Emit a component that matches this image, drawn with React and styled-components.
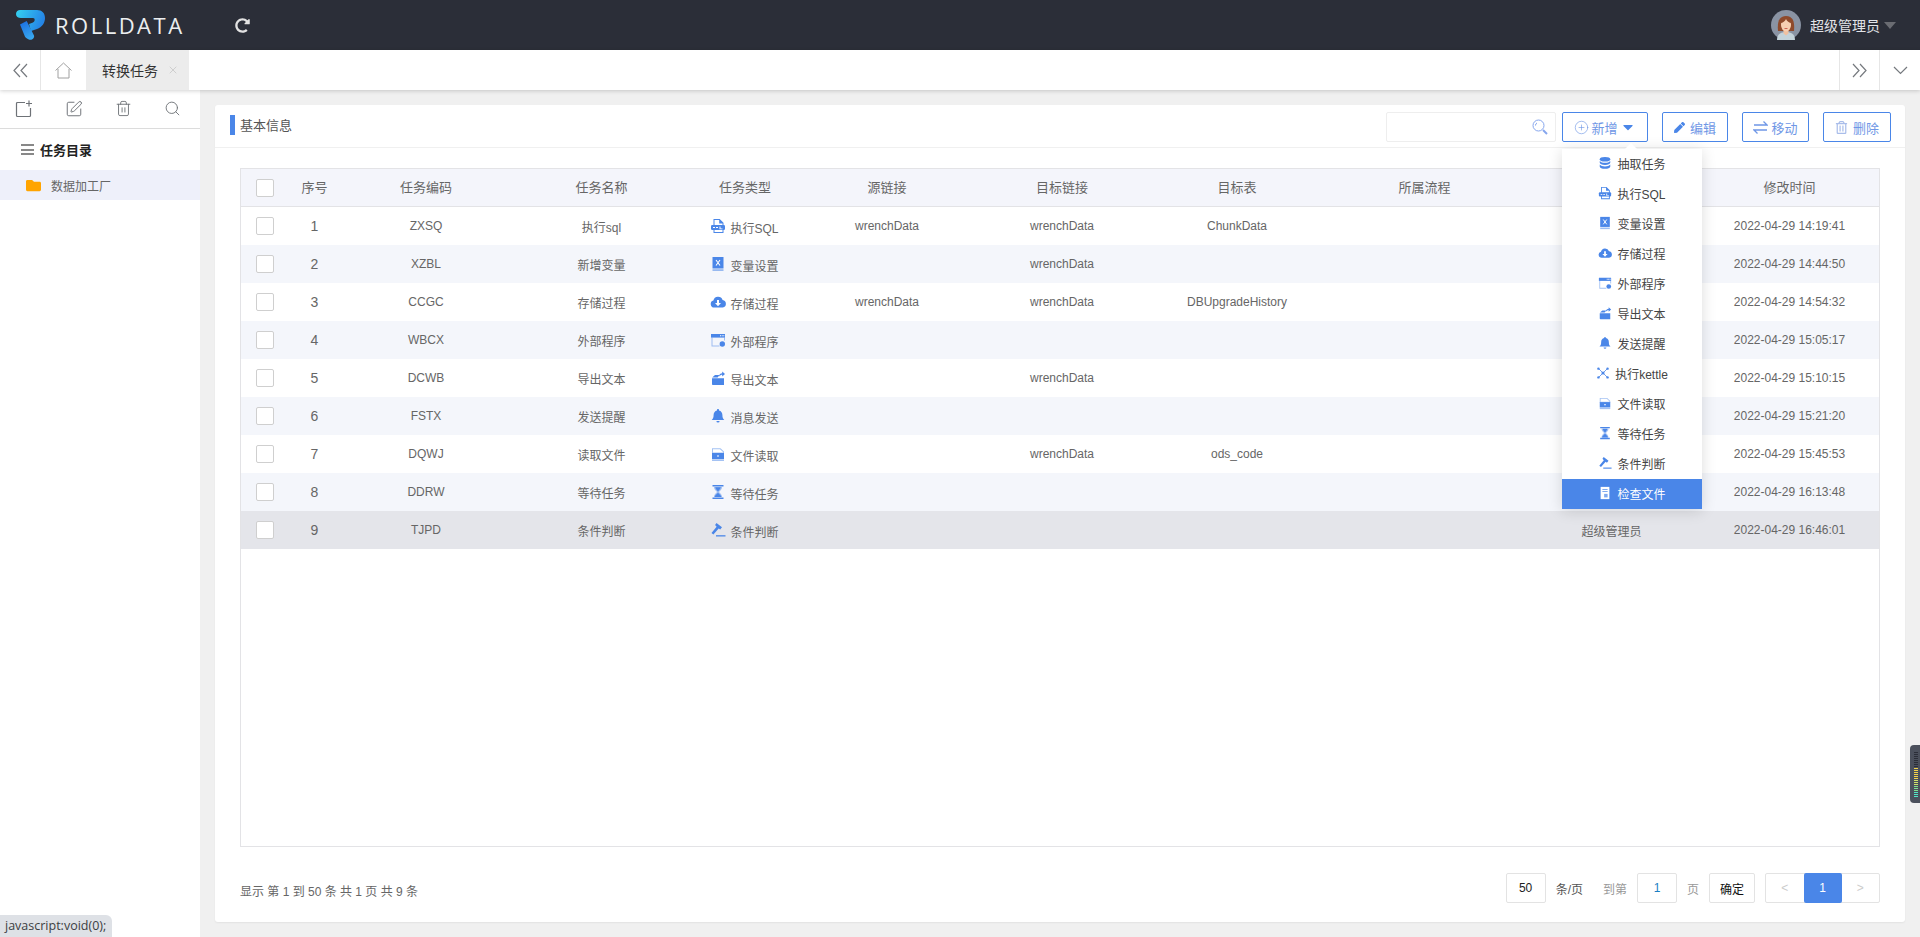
import styled, { createGlobalStyle } from "styled-components";
import { CirclePlus, Search, SquarePen, Trash2, X } from "lucide-react";
import { FaCaretDown, FaFolder, FaPen, FaRedoAlt, FaRegTrashAlt } from "react-icons/fa";

const BLUE = "#4a86e8";

const GlobalStyle = createGlobalStyle`
  html, body { margin: 0; padding: 0; height: 100%; }
  body {
    background: #f0f0f0;
    color: #666;
    font-family: "Liberation Sans", "Noto Sans CJK SC", sans-serif;
    font-size: 12px;
    overflow: hidden;
  }
  #root { height: 100%; }
  * { box-sizing: border-box; }
`;

const icons = {
  database: (
    <>
      <ellipse cx="8" cy="3.6" rx="6" ry="2.6" />
      <path d="M2 5.6c1 1.5 3.4 2.2 6 2.2s5-.7 6-2.2v2.2c0 1.4-2.7 2.5-6 2.5S2 9.2 2 7.8z" />
      <path d="M2 9.8c1 1.5 3.4 2.2 6 2.2s5-.7 6-2.2v2.4c0 1.4-2.7 2.5-6 2.5s-6-1.1-6-2.5z" />
    </>
  ),
  sql: (
    <>
      <path d="M3.5 1h6.2L13.5 4.8V15h-10zM4.5 2v12h8V5.4H9.2V2z" fillRule="evenodd" />
      <rect x="1" y="7" width="14" height="5" rx="1.2" />
      <path d="M3 9h2v1H3zM6 9h2v1H6zM9.5 8.6h1v2h2v.6h-3z" fill="#fff" />
    </>
  ),
  book: (
    <>
      <path d="M2.5 1h11v11.5h-11z" />
      <path d="M2.5 13.2h11V15h-11z" opacity=".55" />
      <path d="M6 4l4 5.5M10 4l-4 5.5" stroke="#fff" strokeWidth="1.1" fill="none" />
    </>
  ),
  cloud: (
    <>
      <path d="M4.2 13.5A3.5 3.5 0 0 1 3.4 6.6 4.8 4.8 0 0 1 12.6 6a3.8 3.8 0 0 1 .2 7.5z" />
      <path d="M7 6h2v3h2L8 12.2 5 9h2z" fill="#fff" />
    </>
  ),
  window: (
    <>
      <path d="M1 2h14v3.6H1z" />
      <path d="M1.5 5.5h1v8h7v1h-8z" opacity=".5" />
      <path d="M14 5.5h1v3h-1z" opacity=".5" />
      <circle cx="12.3" cy="12" r="2.7" />
      <path d="M10 3.2h1v1h-1zM11.7 3.2h1v1h-1zM13.3 3.2h1v1h-1z" fill="#fff" />
    </>
  ),
  exportText: (
    <>
      <path d="M2 8.2h12V15H2.8A.8.8 0 0 1 2 14.2z" />
      <path d="M2.2 7.4 5 5h4.5L7.6 7.4z" />
      <path d="M9 6.4c.2-2 1.6-3.2 3.2-3.2V1.4L15 4l-2.8 2.5V4.8c-1.1 0-2 .5-3.2 1.6z" />
    </>
  ),
  bell: (
    <>
      <path d="M8 1c.6 0 1 .4 1 1v.4c2.2.5 3.4 2.3 3.4 4.6 0 2.6.6 3.9 1.9 5H1.700C3 10.900 3.600 9.600 3.600 7c0-2.300 1.200-4.100 3.400-4.600V2c0-.6.4-1 1-1z" />
      <path d="M6.400 13h3.200a1.600 1.600 0 0 1-3.200 0z" />
    </>
  ),
  kettle: (
    <>
      <path d="M3 3l5 5 5-5M3 13l5-5 5 5" stroke="currentColor" strokeWidth=".9" fill="none" />
      <circle cx="8" cy="8" r="1.800" />
      <circle cx="2.800" cy="3" r="1.400" />
      <circle cx="13.200" cy="3" r="1.400" />
      <circle cx="2.800" cy="13" r="1.400" />
      <circle cx="13.200" cy="13" r="1.400" />
    </>
  ),
  fileRead: (
    <>
      <path d="M2 2.200h8.500L14 5.600v2H2z" opacity=".5" />
      <path d="M3 3.200v3.400h10V6L10 3.200z" fill="#fff" />
      <path d="M2 7h12v6H2z" />
      <path d="M2 13.300h12V15H2z" opacity=".5" />
      <path d="M7 9.500h2v1H7z" fill="#fff" />
    </>
  ),
  hourglass: (
    <>
      <path d="M2.500 1h11v1.500h-11zM2.500 13.500h11V15h-11z" />
      <path d="M4 3h8c0 2.500-2 3.800-3 5 1 1.200 3 2.500 3 5H4c0-2.500 2-3.800 3-5-1-1.200-3-2.500-3-5z" opacity=".5" />
      <path d="M5.200 3.200h5.600C10.400 5 9 6.300 8 7.400 7 6.300 5.600 5 5.200 3.200zM4.600 13c.4-1.800 2.200-3 3.400-4.200 1.200 1.200 3 2.400 3.400 4.200z" />
    </>
  ),
  gavel: (
    <>
      <path d="M6.500 1 12 5.300l-1.800 2.300-1.500-1.100-5.300 6-1.900-1.500 5.100-6.200L5.100 3.100z" />
      <path d="M6 13.200h9.500v1.300H6z" />
    </>
  ),
  checkFile: (
    <>
      <path d="M3 1h10v14H3z" />
      <path d="M5 3.500h6v1H5zM5 5.800h6v1H5z" fill={BLUE} opacity=".7" />
      <path d="M7 9h4v4H7z" fill={BLUE} opacity=".7" />
    </>
  ),
};

const Glyph = ({ name, size = 16 }) => (
  <svg width={size} height={size} viewBox="0 0 16 16" fill="currentColor">
    {icons[name]}
  </svg>
);

const Logo = () => (
  <svg width="29" height="31" viewBox="0 0 29 31">
    <defs>
      <linearGradient id="logoTop" x1="0" y1="0" x2="1" y2="0.3">
        <stop offset="0" stopColor="#35d2f0" />
        <stop offset="1" stopColor="#2585e6" />
      </linearGradient>
      <linearGradient id="logoStem" x1="0.2" y1="0" x2="0.6" y2="1">
        <stop offset="0" stopColor="#1c6fe0" />
        <stop offset="1" stopColor="#38a8f0" />
      </linearGradient>
    </defs>
    <path d="M4 14.500 10.700 11 18 25.500c.8 2.500-2 5-4.500 4.200-1.600-.5-3.500-1.700-4.500-3z" fill="url(#logoStem)" />
    <path
      d="M0 4C0 1.500 2 0 4 0h17c5 0 8 3 8 8s-3 9-8 11l-6 2-2-7 4-1.500C19 11.800 19.500 8 17 8H5C2 8 0 6.500 0 4z"
      fill="url(#logoTop)"
    />
  </svg>
);

const Avatar = () => (
  <svg width="30" height="30" viewBox="0 0 30 30">
    <circle cx="15" cy="15" r="15" fill="#8a93a3" />
    <path d="M7 21c-.5-6-.5-15 8-15s8.500 9 8 15z" fill="#8f4a2b" />
    <path d="M6 30c0-6 4-8 9-8s9 2 9 8z" fill="#c4d3da" />
    <path d="M12.500 19h5v4.500l-2.500 2-2.500-2z" fill="#f0c0a0" />
    <ellipse cx="15" cy="15" rx="5" ry="6.500" fill="#f7cfb2" />
    <path d="M10 13c2.500-.5 4-2 5-4 1 2 2.500 3.500 5 4 0-4-2-6-5-6s-5 2-5 6z" fill="#8f4a2b" />
    <path d="M13.500 18.500h3" stroke="#c9574a" strokeWidth=".9" />
  </svg>
);

const Line = ({ w, h = w, d, color = "#75797e", sw = 1.2 }) => (
  <svg width={w} height={h} viewBox={`0 0 ${w} ${h}`} fill="none" stroke={color} strokeWidth={sw}>
    <path d={d} />
  </svg>
);

const AddSquare = () => (
  <svg width="18" height="18" viewBox="0 0 18 18" fill="none" stroke="#6e7277" strokeWidth="1.200">
    <path d="M10 2.500H2.500a1 1 0 0 0-1 1v12a1 1 0 0 0 1 1h12a1 1 0 0 0 1-1V8" />
    <path d="M14 .5v6M11 3.500h6" />
  </svg>
);

const Magnifier = () => (
  <svg width="16" height="16" viewBox="0 0 16 16" fill="none" stroke="#86a6ee">
    <circle cx="6.500" cy="6.500" r="5.500" />
    <path d="M3.500 6.500a3 3 0 0 1 1.500-2.600" />
    <path d="M11 11l4 4" strokeWidth="2" />
  </svg>
);

const TopBar = styled.header`
  display: flex;
  align-items: center;
  height: 50px;
  flex: none;
  padding: 0 24px 0 16px;
  background: #2b2e38;
  color: #e6e6e6;
`;

const Brand = styled.div`
  display: flex;
  align-items: center;
  gap: 10px;
  width: 219px;
`;

const BrandName = styled.span`
  color: #eceef0;
  font-family: "Open Sans", "Liberation Sans", sans-serif;
  font-size: 22px;
  letter-spacing: 2.5px;
`;

const Reload = styled(FaRedoAlt)`
  font-size: 15px;
  color: #e2e2e2;
`;

const User = styled.div`
  display: flex;
  align-items: center;
  margin-left: auto;
  gap: 9px;
  font-size: 14px;
  color: #e2e4e8;
`;

const UserCaret = styled.span`
  width: 0;
  height: 0;
  margin-left: -5px;
  border-left: 6px solid transparent;
  border-right: 6px solid transparent;
  border-top: 7px solid #6a6c72;
`;

const TabBar = styled.nav`
  display: flex;
  align-items: stretch;
  height: 40px;
  flex: none;
  background: #fff;
  box-shadow: 0 1px 4px rgba(0, 0, 0, 0.18);
  position: relative;
  z-index: 2;
`;

const TabTool = styled.button`
  display: flex;
  align-items: center;
  justify-content: center;
  width: ${(p) => p.$w}px;
  padding: 0;
  border: 0;
  border-right: ${(p) => (p.$edge === "right" ? "1px solid #e6e6e6" : "0")};
  border-left: ${(p) => (p.$edge === "left" ? "1px solid #e6e6e6" : "0")};
  background: transparent;
`;

const ActiveTab = styled.div`
  display: flex;
  align-items: center;
  width: 103px;
  padding-left: 16px;
  gap: 9px;
  background: #ececec;
  color: #333;
  font-size: 14px;
`;

const TabFill = styled.div`
  flex: 1;
`;

const Body = styled.div`
  display: flex;
  flex: 1;
  min-height: 0;
`;

const Sidebar = styled.aside`
  width: 200px;
  flex: none;
  background: #fff;
`;

const SideTools = styled.div`
  display: flex;
  align-items: center;
  height: 39px;
  padding: 0 0 1px 15px;
  gap: 32px;
  border-bottom: 1px solid #dcdcdc;
  color: #6e7277;
`;

const TreeTitle = styled.div`
  display: flex;
  align-items: center;
  height: 41px;
  padding-left: 21px;
  gap: 6px;
  color: #222;
  font-size: 13px;
  font-weight: 700;
`;

const Burger = styled.span`
  display: block;
  width: 13px;
  height: 11px;
  border-top: 2px solid #888;
  border-bottom: 2px solid #888;
  position: relative;

  &::after {
    content: "";
    position: absolute;
    left: 0;
    right: 0;
    top: 2.5px;
    height: 2px;
    background: #888;
  }
`;

const TreeItem = styled.div`
  display: flex;
  align-items: center;
  height: 30px;
  padding-left: 26px;
  gap: 10px;
  background: #eef0fa;
  color: #666;
  font-size: 12px;
`;

const Folder = styled(FaFolder)`
  font-size: 15px;
  color: #ffa400;
`;

const Main = styled.main`
  flex: 1;
  min-width: 0;
  padding: 15px;
`;

const Card = styled.section`
  display: flex;
  flex-direction: column;
  height: 100%;
  background: #fff;
  border-radius: 3px;
  box-shadow: 0 1px 2px rgba(0, 0, 0, 0.06);
`;

const CardHead = styled.div`
  display: flex;
  align-items: flex-start;
  height: 43px;
  flex: none;
  padding: 7px 14px 0 15px;
  border-bottom: 1px solid #f0f0f0;
`;

const CardTitle = styled.h2`
  display: flex;
  align-items: center;
  height: 20px;
  margin: 3px 0 0;
  padding: 0 0 2px 5px;
  border-left: 5px solid ${BLUE};
  color: #555;
  font-size: 13px;
  font-weight: 400;
`;

const HeadTools = styled.div`
  display: flex;
  align-items: center;
  margin-left: auto;
  gap: 14px;
`;

const SearchBox = styled.div`
  display: flex;
  align-items: center;
  justify-content: flex-end;
  width: 170px;
  height: 30px;
  margin-right: -8px;
  padding-right: 7px;
  border: 1px solid #eee;
  border-radius: 2px;
`;

const ToolWrap = styled.div`
  position: relative;
`;

const ToolButton = styled.button`
  display: flex;
  align-items: center;
  justify-content: center;
  width: ${(p) => p.$w}px;
  height: 30px;
  padding: 0;
  gap: ${(p) => p.$gap || 5}px;
  border: 1px solid ${BLUE};
  border-radius: 2px;
  background: #fff;
  color: #6f97e6;
  font: inherit;
  font-size: 13px;
`;

const Menu = styled.ul`
  position: absolute;
  top: 37px;
  left: 0;
  z-index: 5;
  width: 140px;
  margin: 0;
  padding: 0;
  list-style: none;
  background: #fff;
  box-shadow: 0 2px 14px rgba(0, 0, 0, 0.14);

  &::before {
    content: "";
    position: absolute;
    top: -6px;
    left: 63px;
    border-left: 6px solid transparent;
    border-right: 6px solid transparent;
    border-bottom: 6px solid #fff;
  }
`;

const MenuItem = styled.li`
  display: flex;
  align-items: center;
  justify-content: center;
  height: 30px;
  padding-bottom: 2px;
  gap: 5px;
  background: ${(p) => (p.$active ? BLUE : "transparent")};
  color: ${(p) => (p.$active ? "#fff" : "#444")};
  font-size: 12px;

  svg {
    color: ${(p) => (p.$active ? "#fff" : BLUE)};
  }
`;

const CardBody = styled.div`
  display: flex;
  flex-direction: column;
  flex: 1;
  min-height: 0;
  padding: 20px 25px 0;
`;

const Table = styled.div`
  flex: 1;
  min-height: 0;
  border: 1px solid #e3e3e6;
`;

const COLUMNS = "47px 53px 170px 181px 106px 178px 172px 178px 197px 177px 1fr";

const HeadRow = styled.div`
  display: grid;
  grid-template-columns: ${COLUMNS};
  height: 38px;
  border-bottom: 1px solid #e3e3e6;
  background: #f4f5fb;
  color: #666;
  font-size: 13px;
`;

const Row = styled.div`
  display: grid;
  grid-template-columns: ${COLUMNS};
  height: 38px;
  background: ${(p) => (p.$hover ? "#e4e5ea" : p.$even ? "#f4f6fb" : "#fff")};
  color: #666;
  font-size: 12px;
`;

const Cell = styled.div`
  display: flex;
  align-items: center;
  justify-content: center;
  min-width: 0;
  white-space: nowrap;
`;

const HeadCell = styled(Cell)`
  padding-bottom: 2px;
`;

const IndexCell = styled(Cell)`
  font-size: 14px;
`;

const TypeCell = styled(Cell)`
  gap: 4px;
  padding-right: 1px;
  color: #666;

  svg {
    color: ${BLUE};
  }

  span {
    margin-top: 3px;
  }
`;

const Check = styled.span`
  display: block;
  width: 18px;
  height: 18px;
  border: 1px solid #cfcfcf;
  border-radius: 2px;
  background: #fff;
`;

const Footer = styled.div`
  display: flex;
  align-items: center;
  justify-content: space-between;
  height: 75px;
  flex: none;
  padding-top: 7px;
`;

const Summary = styled.div`
  margin-top: 4px;
  color: #666;
  font-size: 12px;
`;

const Pager = styled.div`
  display: flex;
  align-items: center;
  color: #999;
  font-size: 12px;
`;

const PageBox = styled.div`
  display: flex;
  align-items: center;
  justify-content: center;
  width: ${(p) => p.$w}px;
  height: 30px;
  border: 1px solid #e3e3e3;
  border-radius: 2px;
  background: #fff;
  color: ${(p) => p.$color || "#222"};
  font-size: 12px;
`;

const PageLabel = styled.span`
  margin: 0 10px;
  color: ${(p) => p.$color || "#999"};
`;

const PageGroup = styled.div`
  display: flex;
  height: 30px;
  margin-left: 10px;
  border: 1px solid #e3e3e3;
  border-radius: 2px;
`;

const PageNum = styled.div`
  display: flex;
  align-items: center;
  justify-content: center;
  width: ${(p) => p.$w || 37.5}px;
  margin: ${(p) => (p.$active ? "-1px 0" : "0")};
  border-radius: 2px;
  background: ${(p) => (p.$active ? BLUE : "transparent")};
  color: ${(p) => (p.$active ? "#fff" : "#ccc")};
  font-size: 12px;
`;

const StatusBubble = styled.div`
  position: fixed;
  left: 0;
  bottom: 0;
  z-index: 9;
  width: 112px;
  height: 22px;
  padding: 3px 0 0 5px;
  border-top-right-radius: 6px;
  background: #dee1e6;
  color: #3c4043;
  font-family: "Open Sans", "Liberation Sans", sans-serif;
  font-size: 12.5px;
  line-height: 16px;
  white-space: nowrap;
`;

const Meter = styled.div`
  position: fixed;
  right: 0;
  top: 745px;
  z-index: 9;
  display: flex;
  flex-direction: column;
  gap: 1px;
  width: 10px;
  height: 58px;
  padding: 7px 0 0 4px;
  border-radius: 4px 0 0 4px;
  background: #4b505c;
`;

const MeterBar = styled.i`
  display: block;
  width: 4px;
  height: 1px;
  background: ${(p) => p.$c};
`;

const menuItems = [
  ["database", "抽取任务"],
  ["sql", "执行SQL"],
  ["book", "变量设置"],
  ["cloud", "存储过程"],
  ["window", "外部程序"],
  ["exportText", "导出文本"],
  ["bell", "发送提醒"],
  ["kettle", "执行kettle"],
  ["fileRead", "文件读取"],
  ["hourglass", "等待任务"],
  ["gavel", "条件判断"],
  ["checkFile", "检查文件"],
];

const rows = [
  ["ZXSQ", "执行sql", "sql", "执行SQL", "wrenchData", "wrenchData", "ChunkData", "", "14:19:41"],
  ["XZBL", "新增变量", "book", "变量设置", "", "wrenchData", "", "", "14:44:50"],
  ["CCGC", "存储过程", "cloud", "存储过程", "wrenchData", "wrenchData", "DBUpgradeHistory", "", "14:54:32"],
  ["WBCX", "外部程序", "window", "外部程序", "", "", "", "", "15:05:17"],
  ["DCWB", "导出文本", "exportText", "导出文本", "", "wrenchData", "", "", "15:10:15"],
  ["FSTX", "发送提醒", "bell", "消息发送", "", "", "", "", "15:21:20"],
  ["DQWJ", "读取文件", "fileRead", "文件读取", "", "wrenchData", "ods_code", "", "15:45:53"],
  ["DDRW", "等待任务", "hourglass", "等待任务", "", "", "", "", "16:13:48"],
  ["TJPD", "条件判断", "gavel", "条件判断", "", "", "", "超级管理员", "16:46:01"],
];

// the creator column's title sits behind the open menu
const headers = ["序号", "任务编码", "任务名称", "任务类型", "源链接", "目标链接", "目标表", "所属流程", "", "修改时间"];

const meterColors = [
  ...Array(8).fill("#2b2e38"),
  ...Array(6).fill("#f4d44a"),
  ...Array(3).fill("#cfe36a"),
  ...Array(3).fill("#7fe08e"),
  ...Array(3).fill("#52e6c4"),
];

export default function App() {
  return (
    <>
      <GlobalStyle />
      <div style={{ display: "flex", flexDirection: "column", height: "100%" }}>
        <TopBar>
          <Brand>
            <Logo />
            <BrandName>ROLLDATA</BrandName>
          </Brand>
          <Reload />
          <User>
            <Avatar />
            超级管理员
            <UserCaret />
          </User>
        </TopBar>

        <TabBar>
          <TabTool $w={41} $edge="right">
            <Line w={15} d="M7 1 1 7.500l6 6.500M14 1 8 7.500l6 6.500" />
          </TabTool>
          <TabTool $w={45}>
            <Line w={17} d="M.5 8.500 8.500 1l8 7.500M3 7v9h11V7" color="#a0a0a0" sw={1} />
          </TabTool>
          <ActiveTab>
            转换任务
            <X size={12} strokeWidth={1.5} color="#c4c4c4" />
          </ActiveTab>
          <TabFill />
          <TabTool $w={40} $edge="left">
            <Line w={15} d="M1 1l6 6.500L1 14M8 1l6 6.500L8 14" />
          </TabTool>
          <TabTool $w={41} $edge="left">
            <Line w={15} h={9} d="M1 1l6.500 6.500L14 1" />
          </TabTool>
        </TabBar>

        <Body>
          <Sidebar>
            <SideTools>
              <AddSquare />
              <SquarePen size={18} strokeWidth={1.3} />
              <Trash2 size={17} strokeWidth={1.3} />
              <Search size={17} strokeWidth={1.3} />
            </SideTools>
            <TreeTitle>
              <Burger />
              任务目录
            </TreeTitle>
            <TreeItem>
              <Folder />
              数据加工厂
            </TreeItem>
          </Sidebar>

          <Main>
            <Card>
              <CardHead>
                <CardTitle>基本信息</CardTitle>
                <HeadTools>
                  <SearchBox>
                    <Magnifier />
                  </SearchBox>
                  <ToolWrap>
                    <ToolButton $w={86} $gap={2}>
                      <CirclePlus size={15} strokeWidth={1} />
                      新增
                      <FaCaretDown size={16} color={BLUE} />
                    </ToolButton>
                    <Menu>
                      {menuItems.map(([icon, label], i) => (
                        <MenuItem key={icon} $active={i === menuItems.length - 1}>
                          <Glyph name={icon} size={14} />
                          {label}
                        </MenuItem>
                      ))}
                    </Menu>
                  </ToolWrap>
                  <ToolButton $w={66}>
                    <FaPen size={11} color={BLUE} />
                    编辑
                  </ToolButton>
                  <ToolButton $w={67} $gap={3}>
                    <Line w={15} d="M1 5h13L10.500 1.500M14 10H1l3.500 3.500" color="#6f97e6" sw={1.3} />
                    移动
                  </ToolButton>
                  <ToolButton $w={68}>
                    <FaRegTrashAlt size={13} color="#a9bdea" />
                    删除
                  </ToolButton>
                </HeadTools>
              </CardHead>

              <CardBody>
                <Table>
                  <HeadRow>
                    <Cell>
                      <Check />
                    </Cell>
                    {headers.map((h, i) => (
                      <HeadCell key={i}>{h}</HeadCell>
                    ))}
                  </HeadRow>
                  {rows.map((r, i) => (
                    <Row key={r[0]} $even={i % 2 === 1} $hover={i === 8}>
                      <Cell>
                        <Check />
                      </Cell>
                      <IndexCell>{i + 1}</IndexCell>
                      <Cell>{r[0]}</Cell>
                      <Cell>{r[1]}</Cell>
                      <TypeCell>
                        <Glyph name={r[2]} />
                        <span>{r[3]}</span>
                      </TypeCell>
                      <Cell>{r[4]}</Cell>
                      <Cell>{r[5]}</Cell>
                      <Cell>{r[6]}</Cell>
                      <Cell />
                      <Cell>{r[7]}</Cell>
                      <Cell>2022-04-29 {r[8]}</Cell>
                    </Row>
                  ))}
                </Table>

                <Footer>
                  <Summary>显示 第 1 到 50 条 共 1 页 共 9 条</Summary>
                  <Pager>
                    <PageBox $w={40}>50</PageBox>
                    <PageLabel $color="#555">条/页</PageLabel>
                    <PageLabel>到第</PageLabel>
                    <PageBox $w={40} $color="#1b7fc4">1</PageBox>
                    <PageLabel>页</PageLabel>
                    <PageBox $w={46} $color="#111">确定</PageBox>
                    <PageGroup>
                      <PageNum>&lt;</PageNum>
                      <PageNum $active $w={38}>1</PageNum>
                      <PageNum>&gt;</PageNum>
                    </PageGroup>
                  </Pager>
                </Footer>
              </CardBody>
            </Card>
          </Main>
        </Body>
      </div>

      <StatusBubble>javascript:void(0);</StatusBubble>
      <Meter>
        {meterColors.map((c, i) => (
          <MeterBar key={i} $c={c} />
        ))}
      </Meter>
    </>
  );
}
